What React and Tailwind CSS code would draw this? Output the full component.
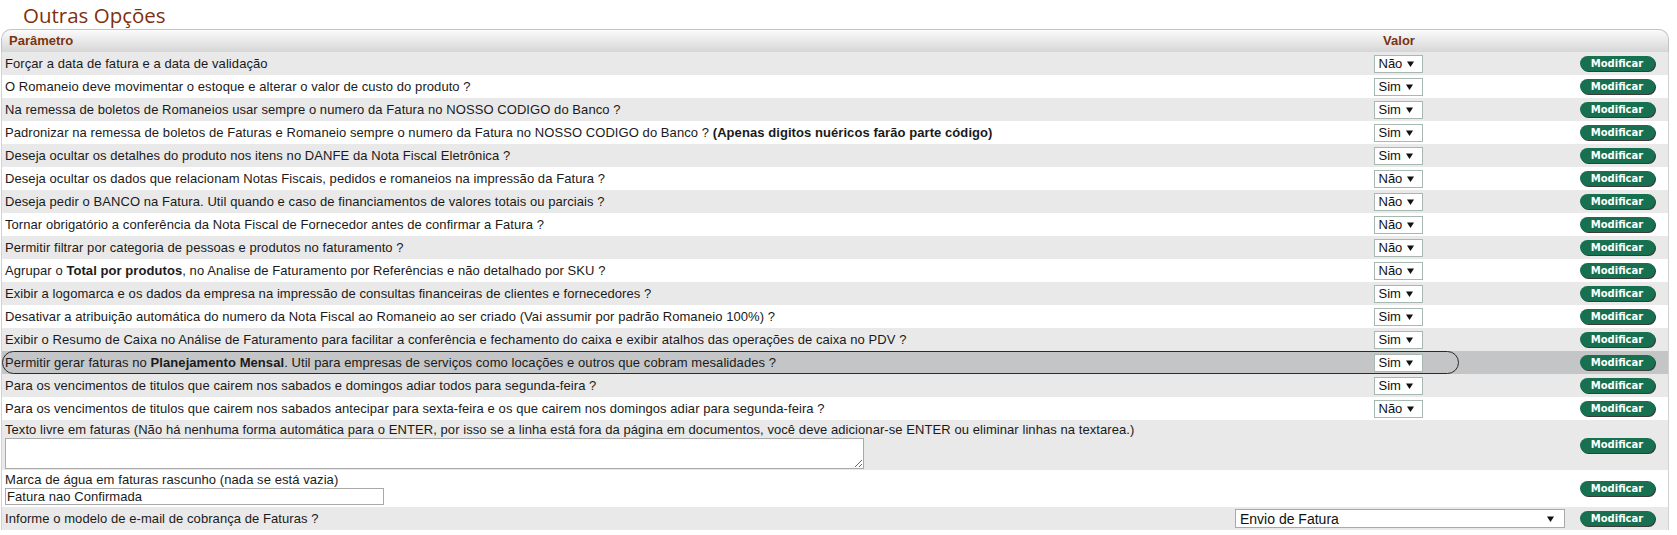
import React from "react";

const rows = [
  { t: <>Forçar a data de fatura e a data de validação</>, v: "Não" },
  { t: <>O Romaneio deve movimentar o estoque e alterar o valor de custo do produto ?</>, v: "Sim" },
  { t: <>Na remessa de boletos de Romaneios usar sempre o numero da Fatura no NOSSO CODIGO do Banco ?</>, v: "Sim" },
  { t: <>Padronizar na remessa de boletos de Faturas e Romaneio sempre o numero da Fatura no NOSSO CODIGO do Banco ? <b>(Apenas digitos nuéricos farão parte código)</b></>, v: "Sim" },
  { t: <>Deseja ocultar os detalhes do produto nos itens no DANFE da Nota Fiscal Eletrônica ?</>, v: "Sim" },
  { t: <>Deseja ocultar os dados que relacionam Notas Fiscais, pedidos e romaneios na impressão da Fatura ?</>, v: "Não" },
  { t: <>Deseja pedir o BANCO na Fatura. Util quando e caso de financiamentos de valores totais ou parciais ?</>, v: "Não" },
  { t: <>Tornar obrigatório a conferência da Nota Fiscal de Fornecedor antes de confirmar a Fatura ?</>, v: "Não" },
  { t: <>Permitir filtrar por categoria de pessoas e produtos no faturamento ?</>, v: "Não" },
  { t: <>Agrupar o <b>Total por produtos</b>, no Analise de Faturamento por Referências e não detalhado por SKU ?</>, v: "Não" },
  { t: <>Exibir a logomarca e os dados da empresa na impressão de consultas financeiras de clientes e fornecedores ?</>, v: "Sim" },
  { t: <>Desativar a atribuição automática do numero da Nota Fiscal ao Romaneio ao ser criado (Vai assumir por padrão Romaneio 100%) ?</>, v: "Sim" },
  { t: <>Exibir o Resumo de Caixa no Análise de Faturamento para facilitar a conferência e fechamento do caixa e exibir atalhos das operações de caixa no PDV ?</>, v: "Sim" },
  { t: <>Permitir gerar faturas no <b>Planejamento Mensal</b>. Util para empresas de serviços como locações e outros que cobram mesalidades ?</>, v: "Sim", hl: true },
  { t: <>Para os vencimentos de titulos que cairem nos sabados e domingos adiar todos para segunda-feira ?</>, v: "Sim" },
  { t: <>Para os vencimentos de titulos que cairem nos sabados antecipar para sexta-feira e os que cairem nos domingos adiar para segunda-feira ?</>, v: "Não" },
];

function Arrow() {
  return (
    <svg width="7" height="6" viewBox="0 0 7 6" className="shrink-0">
      <path d="M0 0.5 L7 0.5 L3.5 6 Z" fill="#111" />
    </svg>
  );
}

function SmallSelect({ v }) {
  return (
    <div className="flex h-[18px] w-[49px] items-center gap-[5px] border border-[#a7b8b1] bg-white pl-[4px] text-[13px] leading-none text-[#111]">
      <span>{v}</span>
      <Arrow />
    </div>
  );
}

function Btn() {
  return (
    <div
      className="flex h-[15px] w-[75px] items-center justify-center rounded-full bg-[#17704f] text-[10px] font-bold leading-none text-white shadow-[1px_1px_0_#3a3a3a]"
      style={{ fontFamily: '"DejaVu Sans", sans-serif' }}
    >
      Modificar
    </div>
  );
}

export default function App() {
  return (
    <div
      className="h-[535px] w-[1677px] overflow-hidden bg-white text-[13px] tracking-[0.07px] text-[#1a1a1a]"
      style={{ fontFamily: '"Liberation Sans", Arial, sans-serif' }}
    >
      <div
        className="h-[29px] pl-[23px] pt-[2px] text-[20.5px] leading-[26px] tracking-normal text-[#7f2f0d]"
        style={{ fontFamily: '"Open Sans", sans-serif' }}
      >
        Outras Opções
      </div>
      <div className="ml-[1px] w-[1668px]">
        <div className="grid h-[23px] grid-cols-[1231px_338px_1fr] items-center rounded-t-[10px] border border-b-0 border-[#c4c4c4] bg-gradient-to-b from-[#fbfbfb] to-[#d6d6d6] font-bold tracking-normal text-[#7a3412]">
          <div className="pl-[7px]">Parâmetro</div>
          <div className="pr-[6px] text-center">Valor</div>
          <div />
        </div>
        <div className="border-x border-[#d2d2d2]">
          {rows.map((r, i) => (
            <div
              key={i}
              className={
                "relative grid h-[23px] grid-cols-[1230px_338px_1fr] items-center " +
                (r.hl ? "bg-[#c3c5c7]" : i % 2 === 0 ? "bg-[#e9e9e9]" : "bg-white")
              }
            >
              {r.hl && (
                <div className="pointer-events-none absolute left-0 top-0 h-[23px] w-[1457px] rounded-full border border-[#2a2a2a]" />
              )}
              <div className="whitespace-nowrap pl-[3px]">{r.t}</div>
              <div className="flex justify-center pr-[6px] tracking-normal">
                <SmallSelect v={r.v} />
              </div>
              <div className="flex justify-center pr-[4px] tracking-normal">
                <Btn />
              </div>
            </div>
          ))}
          <div className="grid h-[50px] grid-cols-[1230px_338px_1fr] items-center bg-[#e9e9e9]">
            <div className="flex h-full flex-col pl-[3px] pt-[2px]">
              <div className="h-[15px] whitespace-nowrap leading-[15px]">
                Texto livre em faturas (Não há nenhuma forma automática para o ENTER, por isso se a linha está fora da página em documentos, você deve adicionar-se ENTER ou eliminar linhas na textarea.)
              </div>
              <textarea
                className="mt-[1px] h-[31px] w-[859px] resize border border-[#a9a9a9] bg-white"
                defaultValue=""
              />
            </div>
            <div />
            <div className="flex justify-center pr-[4px] tracking-normal">
              <Btn />
            </div>
          </div>
          <div className="grid h-[37px] grid-cols-[1230px_338px_1fr] items-center bg-white">
            <div className="flex h-full flex-col pl-[3px] pt-[2px]">
              <div className="h-[15px] whitespace-nowrap leading-[15px]">
                Marca de água em faturas rascunho (nada se está vazia)
              </div>
              <div className="mt-[1px] flex h-[17px] w-[379px] items-center border border-[#a9a9a9] bg-white pl-[1px] leading-none">
                Fatura nao Confirmada
              </div>
            </div>
            <div />
            <div className="flex justify-center pr-[4px] tracking-normal">
              <Btn />
            </div>
          </div>
          <div className="grid h-[23px] grid-cols-[1230px_338px_1fr] items-center bg-[#e9e9e9]">
            <div className="whitespace-nowrap pl-[3px]">Informe o modelo de e-mail de cobrança de Faturas ?</div>
            <div className="flex justify-end pr-[5px] tracking-normal">
              <div className="flex h-[19px] w-[330px] items-center justify-between border border-[#a9a9a9] bg-white pl-[4px] pr-[10px] text-[14px] leading-none text-[#111]">
                <span>Envio de Fatura</span>
                <Arrow />
              </div>
            </div>
            <div className="flex justify-center pr-[4px] tracking-normal">
              <Btn />
            </div>
          </div>
        </div>
      </div>
    </div>
  );
}
